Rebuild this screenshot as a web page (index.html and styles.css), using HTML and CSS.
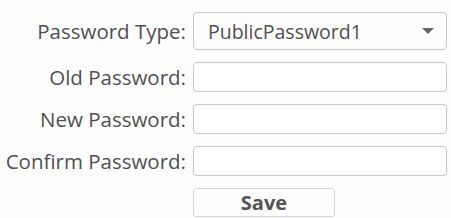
FILE: index.html
```html
<!DOCTYPE html>
<html lang="en">

<head>
    <meta charset="UTF-8">
    <title>Password</title>
    <link rel="stylesheet" href="styles.css">
</head>

<body>
    <div class="form">
        <label class="label">Password Type:</label>
        <div class="select">
            <span>PublicPassword1</span>
            <span class="arrow"></span>
        </div>

        <label class="label">Old Password:</label>
        <input type="password" class="field">

        <label class="label">New Password:</label>
        <input type="password" class="field">

        <label class="label">Confirm Password:</label>
        <input type="password" class="field">

        <div></div>
        <button class="save-btn">Save</button>
    </div>
</body>

</html>
```

FILE: styles.css
```css
body {
    margin: 0;
    padding: 0;
    background: #fefefe;
    font-family: "Open Sans", sans-serif;
    color: #505050;
}

.form {
    display: grid;
    grid-template-columns: 186px 254px;
    column-gap: 7px;
    row-gap: 12px;
    align-items: center;
    padding-top: 12px;
}

.label {
    text-align: right;
    font-size: 20.5px;
    white-space: nowrap;
}

.select {
    height: 38px;
    box-sizing: border-box;
    border: 1.5px solid #c8c8c8;
    border-radius: 4px;
    display: flex;
    align-items: center;
    justify-content: space-between;
    padding: 0 12px 0 14px;
    font-size: 19.5px;
}

.arrow {
    width: 0;
    height: 0;
    border-left: 6px solid transparent;
    border-right: 6px solid transparent;
    border-top: 6px solid #666;
}

.field {
    height: 30px;
    box-sizing: border-box;
    border: 1.5px solid #c8c8c8;
    border-radius: 4px;
    margin: 0;
    background: #fff;
}

.save-btn {
    width: 142px;
    height: 29px;
    border: 1.5px solid #d4d4d4;
    border-radius: 3px;
    background: #fdfdfd;
    color: #555;
    font-family: "Open Sans", sans-serif;
    font-weight: bold;
    font-size: 20px;
    padding: 0;
}
```
